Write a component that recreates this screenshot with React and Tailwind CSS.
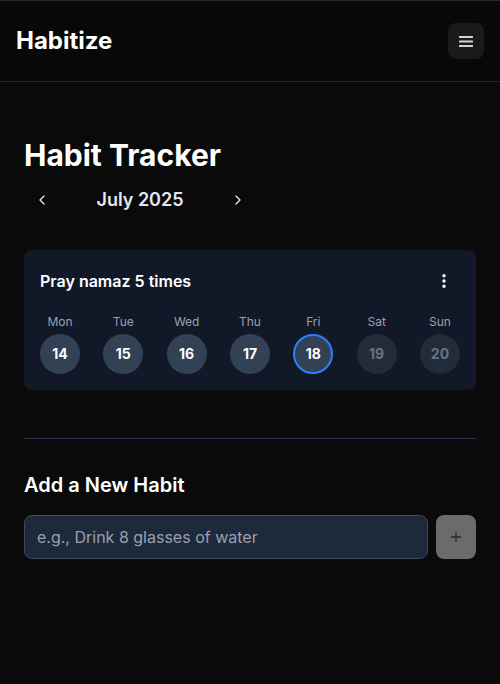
import React from 'react';
import { ChevronLeft, ChevronRight, EllipsisVertical, Plus } from 'lucide-react';

const days = [
  { label: 'Mon', num: 14 },
  { label: 'Tue', num: 15 },
  { label: 'Wed', num: 16 },
  { label: 'Thu', num: 17 },
  { label: 'Fri', num: 18, today: true },
  { label: 'Sat', num: 19, future: true },
  { label: 'Sun', num: 20, future: true },
];

const MenuIcon = () => (
  <svg width="14" height="11" viewBox="0 0 14 11" fill="#d4d4d4">
    <rect x="0" y="0" width="14" height="2" rx="0.5" />
    <rect x="0" y="4.5" width="14" height="2" rx="0.5" />
    <rect x="0" y="9" width="14" height="2" rx="0.5" />
  </svg>
);

const App = () => {
  return (
    <div
      className="min-h-[684px] bg-[#0a0a0a] text-white border-t border-[#2a2a2e]"
      style={{ fontFamily: 'Inter, "Noto Sans", sans-serif' }}
    >
      <header className="h-[81px] flex items-center justify-between px-4 border-b border-[#1f2733] bg-[#080808]">
        <h1 className="text-2xl font-bold">Habitize</h1>
        <button className="w-9 h-9 rounded-lg bg-[#1a1a1a] flex items-center justify-center">
          <MenuIcon />
        </button>
      </header>

      <main className="px-6 pt-[55px]">
        <h2 className="text-3xl font-bold">Habit Tracker</h2>

        <div className="flex items-center h-8 mt-[11px] ml-[2px]">
          <button className="w-8 h-8 flex items-center justify-center text-gray-200">
            <ChevronLeft size={16} strokeWidth={2} />
          </button>
          <span className="w-[164px] text-center text-lg font-semibold text-slate-200">July 2025</span>
          <button className="w-8 h-8 flex items-center justify-center text-gray-200">
            <ChevronRight size={16} strokeWidth={2} />
          </button>
        </div>

        <div className="mt-[34px] bg-[#111827] rounded-lg p-4">
          <div className="flex items-center justify-between h-[30px] mb-[18px]">
            <h3 className="text-base font-semibold">Pray namaz 5 times</h3>
            <button className="w-8 h-8 flex items-center justify-center text-white">
              <EllipsisVertical size={18} strokeWidth={2.5} />
            </button>
          </div>
          <div className="flex justify-between">
            {days.map((d) => (
              <div key={d.label} className="flex flex-col items-center gap-1">
                <span className="text-xs text-gray-400 leading-4">{d.label}</span>
                <div
                  className={
                    d.today
                      ? 'w-10 h-10 rounded-full bg-[#334155] border-2 border-blue-500 flex items-center justify-center text-sm font-bold text-white'
                      : d.future
                      ? 'w-10 h-10 rounded-full bg-[#222b3a] flex items-center justify-center text-sm font-bold text-gray-500'
                      : 'w-10 h-10 rounded-full bg-[#334155] flex items-center justify-center text-sm font-bold text-white'
                  }
                >
                  {d.num}
                </div>
              </div>
            ))}
          </div>
        </div>

        <div className="mt-12 border-t border-[#26344d]" />

        <h2 className="mt-8 text-xl font-semibold">Add a New Habit</h2>

        <div className="mt-4 flex gap-2">
          <input
            type="text"
            placeholder="e.g., Drink 8 glasses of water"
            className="flex-1 h-11 rounded-lg bg-[#1e293b] border border-[#3b4a63] px-3 text-base text-white placeholder:text-gray-400 outline-none"
          />
          <button className="w-10 h-11 rounded-lg bg-[#6b6b6b] flex items-center justify-center text-[#2a2a2a]">
            <Plus size={16} strokeWidth={2} />
          </button>
        </div>
      </main>
    </div>
  );
};

export default App;
